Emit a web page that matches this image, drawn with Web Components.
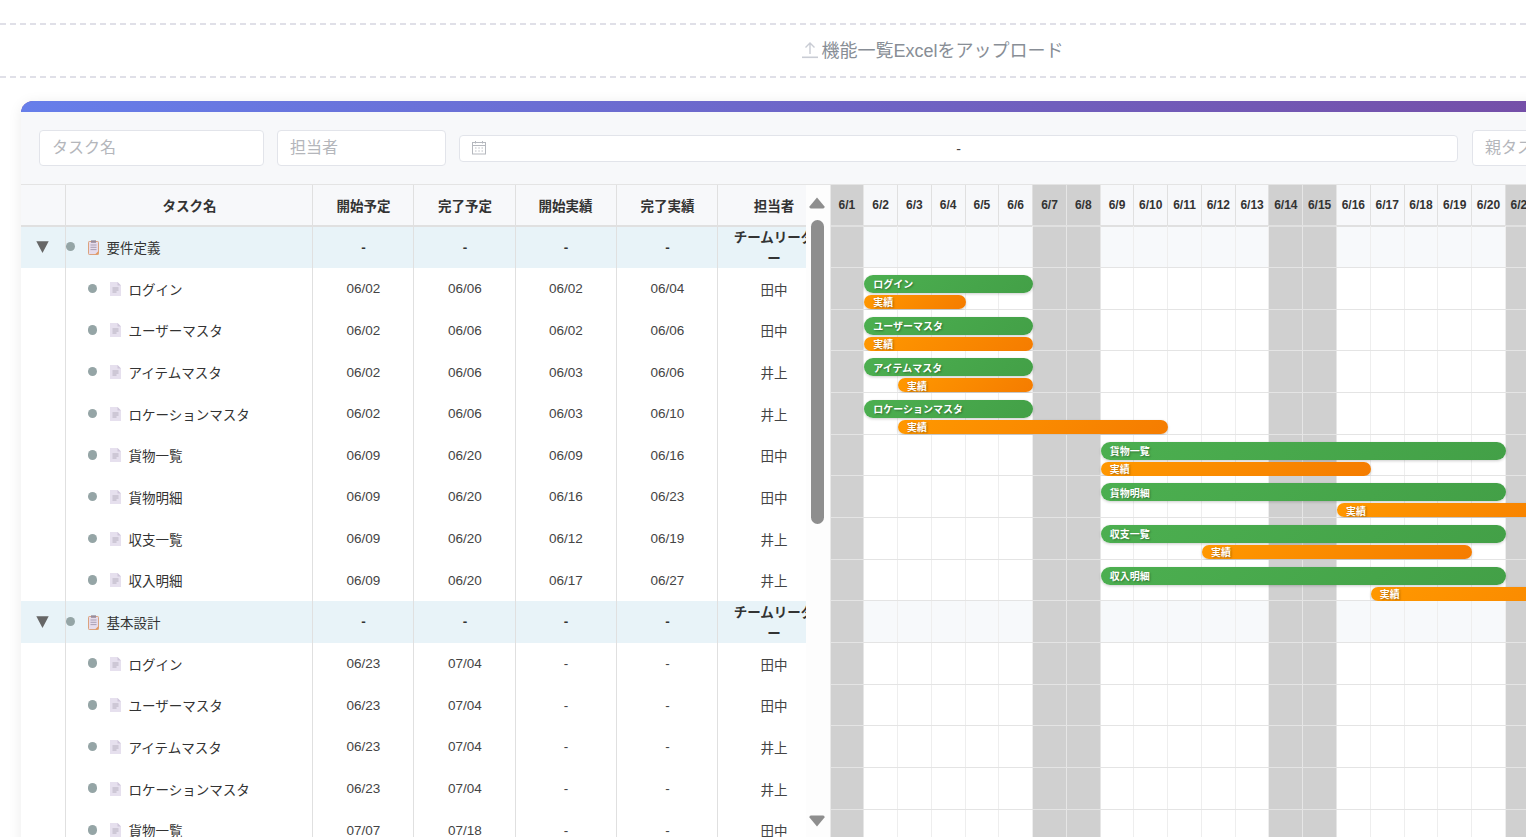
<!DOCTYPE html>
<html lang="ja"><head><meta charset="utf-8"><title>Gantt</title>
<style>
html,body{margin:0;padding:0;height:837px;overflow:hidden;background:#fff;font-family:"Liberation Sans","Noto Sans CJK JP",sans-serif;color:#333}
</style></head><body>
<x-app></x-app>
<template id="t-upload"><style>
:host{display:flex;align-items:center;justify-content:center;gap:3px;box-sizing:border-box;width:1866px;height:55px;margin-top:23px;padding-bottom:4px;border:solid #e0e0e8;border-width:2px 0;border-style:dashed none;font-size:18px;color:#888e96}
svg{display:block;margin-top:2px}
</style><svg width="16" height="18" viewBox="0 0 16 18" fill="none" stroke="#c9ccd4" stroke-width="1.4"><path d="M8 13V2M3.5 6.5 8 2l4.500 4.500"/><path d="M0 16.300h16" stroke-width="1.600"/></svg><slot></slot></template>
<template id="t-field"><style>
:host{display:flex;align-items:center;flex:none;box-sizing:border-box;height:36px;padding:0 0 4px 12px;background:#fff;border:1.500px solid #e2e4ea;border-radius:4px;font-size:16px;color:#b4b6bb}
</style><slot></slot></template>
<template id="t-range"><style>
:host{display:flex;align-items:center;flex:none;box-sizing:border-box;position:relative;height:27px;margin-top:1px;background:#fff;border:1.500px solid #e2e4ea;border-radius:4px;font-size:14px;color:#444;justify-content:center}
svg{position:absolute;left:11px;top:4px}
</style><svg width="16" height="15" viewBox="0 0 16 15" fill="none" stroke="#b5b8be"><rect x="1.500" y="2.500" width="13" height="11.500"/><path d="M1.500 5.500h13M4.500 1v2.500M11.500 1v2.500"/><path d="M4 8h1.500M7.300 8h1.500M10.500 8h1.500M4 11h1.500M7.300 11h1.500M10.500 11h1.500" stroke-width=".9"/></svg><slot></slot></template>
<template id="t-table"><style>
:host{display:block;flex:none;width:785px;overflow:hidden;background:#fff;font-size:13.500px}
.g{display:grid;width:809px;grid-template-columns:44.500px 247px 101px 102px 101px 101px 113px;grid-template-rows:41.330px;grid-auto-rows:41.670px}
.c{box-sizing:border-box;display:flex;align-items:center;justify-content:center;border-right:1px solid #e0e0e0;min-width:0;text-align:center;line-height:20.250px;color:#444;padding:1px 11px 0 13px}
.c:last-child,.c.l{border-right:none}
.h{background:#f7f8fa;border-bottom:1px solid #e0e0e0;font-weight:700;color:#333;padding-top:4px}
.f{box-shadow:inset 0 1px #e0e0e0}
.x{padding-left:12.500px;padding-right:11.500px}
.h.x{padding-left:12px;padding-right:12px}
.grp{background:#e8f3f8;font-weight:700;color:#333}
.n{justify-content:flex-start;padding:0;font-weight:400;color:#333;white-space:nowrap}
.n.t{padding-left:22px}
.n span{padding-top:4px;margin-left:1px}
.dot{flex:none;width:9.500px;height:9.500px;border-radius:50%;background:#95a5a6;margin:-1px 12.500px 0 0}
.ic{flex:none;margin-right:7px}
.tri{padding:0 1px 0 0}
.who{padding:4px 12px 0}
.grp.who{padding:3px 12px 0}
.h.who{padding:4px 12px 0}
</style><div class="g" id="g"></div></template>
<template id="t-scroll"><style>
:host{display:block;flex:none;position:relative;box-sizing:border-box;width:24.500px;background:#fdfdfd;border-right:1px solid #e8e8e8}
svg{position:absolute;left:3px}
.u{top:11.500px}.d{top:629.500px}
.th{position:absolute;left:5px;top:35px;width:13px;height:304px;border-radius:6.500px;background:#8e8e8e}
</style><svg class="u" width="16" height="12" viewBox="0 0 16 12"><path d="M8 .5 15.500 9.500Q16 11.500 14 11.500H2Q0 11.500 .5 9.500Z" fill="#8e8e8e"/></svg><div class="th"></div><svg class="d" width="16" height="12" viewBox="0 0 16 12"><path d="M8 11.500 15.500 2.500Q16 .5 14 .5H2Q0 .5 .5 2.500Z" fill="#8e8e8e"/></svg></template>
<template id="t-gantt"><style>
:host{display:block;flex:none;width:1100px;font-size:12px}
.r{display:grid;grid-template-columns:repeat(30,33.770px);position:relative;height:41.670px;box-sizing:border-box;border-bottom:1px solid #e4e4e4;background:#fff}
.r.gp{background:#f7f9fb}
.r.hd{height:41.330px;border-bottom:1px solid #e0e0e0;background:#f7f8fa}
.d{box-sizing:border-box;border-right:1px solid #eeeeee}
.r.first .d{box-shadow:inset 0 1px #e0e0e0}
.hd .d{display:flex;align-items:center;justify-content:center;font-weight:700;color:#333;border-right:1px solid #e0e0e0;white-space:nowrap}
.w,.hd .w{background:#d0d0d0;border-right-color:#e6e6e6}
.b{position:absolute;box-sizing:border-box;color:#fff;font-size:10px;font-weight:700;padding:1.500px 0 0 9px;white-space:nowrap;overflow:hidden;box-shadow:0 1px 3px rgba(0,0,0,.2);text-shadow:1px 1px 2px rgba(0,0,0,.35)}
.p{top:7px;height:18px;line-height:18px;border-radius:9px;background:linear-gradient(135deg,#4caf50,#43a047)}
.a{top:27px;height:14px;line-height:14px;border-radius:7px;background:linear-gradient(135deg,#ff9800,#f57c00)}
</style><div id="g"></div></template>
<template id="t-app"><style>
:host{display:block;height:837px;overflow:hidden;position:relative}
.top{height:0;box-shadow:0 1px 7px rgba(0,0,0,.12)}
.card{box-sizing:border-box;width:1900px;margin:23px 0 0 21px;background:#f7f8fa;border-radius:12px 12px 0 0;overflow:hidden;box-shadow:0 2px 14px rgba(0,0,0,.08)}
.bar{height:11px;background:linear-gradient(90deg,#667eea,#764ba2);background-size:1650px 100%;background-repeat:no-repeat;background-color:#764ba2}
.filters{display:flex;align-items:center;gap:13px;height:73px;padding:0 0 0 18px;box-sizing:border-box;border-bottom:1px solid #e4e4e4}
.main{display:flex;height:700px;overflow:hidden}
.last{margin-left:1px}
</style><div class="top"></div><x-upload>機能一覧Excelをアップロード</x-upload>
<div class="card"><div class="bar"></div><div class="filters"><x-field style="width:225px">タスク名</x-field><x-field style="width:169px">担当者</x-field><x-range style="width:999px">-</x-range><x-field class="last" style="width:200px">親タスク</x-field></div>
<div class="main"><x-table></x-table><x-scroll></x-scroll><x-gantt></x-gantt></div></div></template>
<script>
const tasks=[
["g","要件定義","-","-","-","-","チームリーダー"],
["t","ログイン","06/02","06/06","06/02","06/04","田中",1,5,1,3],
["t","ユーザーマスタ","06/02","06/06","06/02","06/06","田中",1,5,1,5],
["t","アイテムマスタ","06/02","06/06","06/03","06/06","井上",1,5,2,4],
["t","ロケーションマスタ","06/02","06/06","06/03","06/10","井上",1,5,2,8],
["t","貨物一覧","06/09","06/20","06/09","06/16","田中",8,12,8,8],
["t","貨物明細","06/09","06/20","06/16","06/23","田中",8,12,15,8],
["t","収支一覧","06/09","06/20","06/12","06/19","井上",8,12,11,8],
["t","収入明細","06/09","06/20","06/17","06/27","井上",8,12,16,11],
["g","基本設計","-","-","-","-","チームリーダー"],
["t","ログイン","06/23","07/04","-","-","田中"],
["t","ユーザーマスタ","06/23","07/04","-","-","田中"],
["t","アイテムマスタ","06/23","07/04","-","-","井上"],
["t","ロケーションマスタ","06/23","07/04","-","-","井上"],
["t","貨物一覧","07/07","07/18","-","-","田中"]];
const DAY=33.77;
const icoG='<svg class="ic" width="11" height="15" viewBox="0 0 11 15"><rect x=".5" y="1.500" width="10" height="13" rx=".8" fill="#e6dcec" stroke="#dca27e"/><path d="M7 14.500h3.500V11z" fill="#e39a62"/><rect x="3" y=".3" width="5" height="2.500" fill="#9a8d9c"/><path d="M2.500 5h6M2.500 7.300h6M2.500 9.600h6" stroke="#a99fb3"/></svg>';
const icoT='<svg class="ic" width="11" height="14" viewBox="0 0 11 14"><path d="M0 0h7.500L11 3.500V14H0z" fill="#e6e0ee"/><path d="M7.500 0 11 3.500H7.500z" fill="#cfc6da"/><path d="M2.500 6h6M2.500 8h6M2.500 10h4" stroke="#b0a9b8" stroke-width=".9"/></svg>';
const tri='<svg width="13" height="12" viewBox="0 0 13 12"><path d="M.3 .2h12.400L6.500 12z" fill="#666"/></svg>';
class Base extends HTMLElement{constructor(){super();this.attachShadow({mode:"open"}).append(document.getElementById(this.constructor.tpl).content.cloneNode(true));}}
class XUpload extends Base{static tpl="t-upload"}
class XField extends Base{static tpl="t-field"}
class XRange extends Base{static tpl="t-range"}
class XScroll extends Base{static tpl="t-scroll"}
class XTable extends Base{static tpl="t-table";connectedCallback(){
 let h='<div class="c h"></div><div class="c h">タスク名</div>'+["開始予定","完了予定","開始実績","完了実績"].map((s,i)=>`<div class="c h${i==2?" x":""}">${s}</div>`).join("")+'<div class="c h l who">担当者</div>';
 tasks.forEach((t,r)=>{const g=t[0]=="g",k=(g?" grp":"")+(r==0?" f":"");
  h+=`<div class="c tri${k}">${g?tri:""}</div><div class="c n${g?"":" t"}${k}"><i class="dot"></i>${g?icoG:icoT}<span>${t[1]}</span></div>`;
  for(let i=2;i<6;i++)h+=`<div class="c${k}${i==4?" x":""}">${t[i]}</div>`;
  h+=`<div class="c l who${k}">${t[6]}</div>`;});
 this.shadowRoot.getElementById("g").innerHTML=h;}}
class XGantt extends Base{static tpl="t-gantt";connectedCallback(){
 const days=[];for(let i=0;i<30;i++){const w=new Date(2025,5,i+1).getDay();days.push({l:"6/"+(i+1),w:w==0||w==6});}
 const cells=hd=>days.map(d=>`<div class="d${d.w?" w":""}">${hd?d.l:""}</div>`).join("");
 let h=`<div class="r hd">${cells(1)}</div>`;
 tasks.forEach((t,r)=>{let b="";if(t.length>7){
   b=`<div class="b p" style="left:${t[7]*DAY}px;width:${t[8]*DAY}px">${t[1]}</div><div class="b a" style="left:${t[9]*DAY}px;width:${t[10]*DAY}px">実績</div>`;}
  h+=`<div class="r${t[0]=="g"?" gp":""}${r==0?" first":""}">${cells(0)}${b}</div>`;});
 this.shadowRoot.getElementById("g").innerHTML=h;}}
class XApp extends Base{static tpl="t-app"}
customElements.define("x-upload",XUpload);customElements.define("x-field",XField);customElements.define("x-range",XRange);customElements.define("x-scroll",XScroll);customElements.define("x-table",XTable);customElements.define("x-gantt",XGantt);customElements.define("x-app",XApp);
</script></body></html>
